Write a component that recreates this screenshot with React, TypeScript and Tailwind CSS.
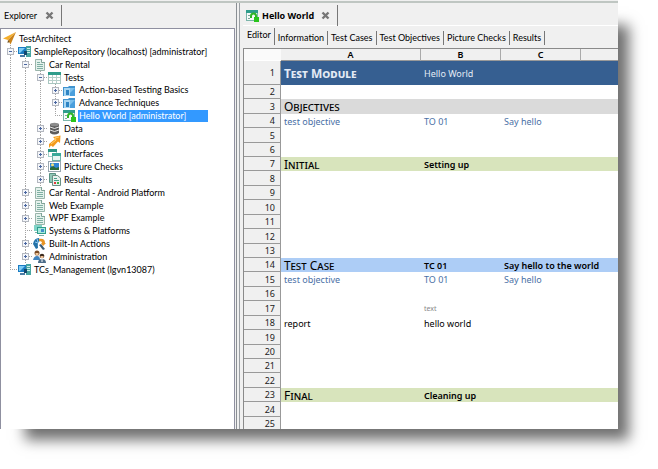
import { useState } from "react";
import type { ReactNode } from "react";

type IconName =
  | "logo" | "repo" | "project" | "tests" | "folder" | "module" | "data" | "actions"
  | "interfaces" | "picture" | "results" | "systems" | "builtin" | "admin";

function Glyph({ name }: { name: IconName }) {
  switch (name) {
    case "logo":
      return (
        <>
          <path d="M13 0L0 6.5L5 8Z" fill="#f5ae2b" />
          <path d="M13 0L5 8L7.5 12.5Z" fill="#c9821a" />
          <path d="M5 8L4.5 11L6.5 10Z" fill="#6b4a18" />
        </>
      );
    case "repo":
      return (
        <>
          <rect x="8" y="1" width="5" height="11" fill="#48a5a2" />
          <path d="M9 3.500H12M9 5.500H12M9 7.500H12" stroke="#c9efea" />
          <rect x="0" y="2" width="8" height="7" fill="#1b7cc2" />
          <path d="M1 3H7L2 8H1Z" fill="#7ccbf5" />
          <rect x="2" y="10" width="5" height="2" fill="#4a7ca6" />
          <rect x="6" y="6" width="3" height="4" fill="#14486e" />
        </>
      );
    case "project":
      return (
        <>
          <path d="M2.500 1.500H8.500L11.500 4.500V12.500H2.500Z" fill="#e4f1ec" stroke="#9ab5ab" />
          <path d="M8.500 1V4.500H12" fill="#fff" stroke="#7fa398" />
          <path d="M4 4.500H7M4 6.500H10M4 8.500H10M4 10.500H10" stroke="#7fb0a3" />
        </>
      );
    case "tests":
      return (
        <>
          <rect x="0.500" y="1.500" width="12" height="11" fill="#fff" stroke="#a9c6c0" />
          <rect x="0" y="1" width="13" height="3" fill="#2f9d8c" />
          <path d="M1 6.500H12M1 9.500H12M4.500 4V12M8.500 4V12" stroke="#b6cfca" />
        </>
      );
    case "folder":
      return (
        <>
          <path d="M0 3H5L6 2H12V12H0Z" fill="#3f93cf" />
          <path d="M7 4H12V12H7Z" fill="#4b9fdc" />
          <path d="M7 4H12L7 9Z" fill="#7cc0ec" />
          <rect x="1" y="4" width="6" height="8" fill="#a8d6f2" />
          <rect x="3" y="6" width="3" height="5" fill="#2d84c4" />
        </>
      );
    case "module":
      return (
        <>
          <rect x="0.500" y="1.500" width="11" height="10" fill="#f6faf9" stroke="#7bb5aa" />
          <rect x="0" y="1" width="12" height="3" fill="#2f9d8c" />
          <path d="M2 6.500H4M2 9.500H4" stroke="#7fa59d" />
          <path d="M5 9V7Q5 4.500 7.500 4.500Q10 4.500 10 7V9" fill="none" stroke="#2fb526" strokeWidth="2" />
          <rect x="8" y="8" width="5" height="5" fill="#29c41c" />
        </>
      );
    case "data":
      return (
        <>
          <path d="M2 2V11Q6.500 14 11 11V2Z" fill="#5c5c5c" />
          <ellipse cx="6.500" cy="2.500" rx="4.500" ry="1.800" fill="#8c8c8c" />
          <path d="M2 5Q6.500 8 11 5M2 8Q6.500 11 11 8" fill="none" stroke="#e6e6e6" />
        </>
      );
    case "actions":
      return (
        <>
          <path d="M12.500 0.500L5 2L7 4L1 9V13L3 10.500L5 12L10 6.500L12 8Z" fill="#f39a1d" />
          <path d="M11 2L7 3L8 5L3 9" fill="none" stroke="#ffd372" />
        </>
      );
    case "interfaces":
      return (
        <>
          <rect x="0.500" y="1.500" width="8" height="7" fill="#fff" stroke="#9fcfc6" />
          <rect x="0" y="1" width="9" height="3" fill="#2b9686" />
          <rect x="4.500" y="5.500" width="8" height="7" fill="#e8f6f3" stroke="#6fb3a7" />
          <rect x="4" y="5" width="9" height="3" fill="#3aa999" />
        </>
      );
    case "picture":
      return (
        <>
          <rect x="0.500" y="1.500" width="12" height="10" fill="#fff" stroke="#9aa7b0" />
          <rect x="2" y="3" width="9" height="7" fill="#2f86d6" />
          <path d="M2 10V8L5 6L8 8L11 7V10Z" fill="#2b6b3a" />
          <circle cx="4.500" cy="4.800" r="1.500" fill="#f3e27c" />
        </>
      );
    case "results":
      return (
        <>
          <path d="M1.500 0.500H7.500V9.500H1.500Z" fill="#8fc7b6" stroke="#5a9183" />
          <path d="M4.500 2.500H9.500L12.500 5V12.500H4.500Z" fill="#e8f1ee" stroke="#6a8f84" />
          <path d="M6 5.500H9M6 7.500H11" stroke="#48a08a" />
          <rect x="6" y="9" width="2" height="2" fill="#e23b3b" />
          <rect x="9" y="9" width="2" height="2" fill="#35b146" />
        </>
      );
    case "systems":
      return (
        <>
          <rect x="1" y="1" width="8" height="6" fill="#7fd3c6" />
          <rect x="4" y="3" width="9" height="7" fill="#2f9d8c" />
          <rect x="5" y="4" width="7" height="5" fill="#a9eadd" />
          <path d="M8 5H11V8H8Z" fill="#3f8fc9" />
          <path d="M6 11.500H11M2 8.500H4" stroke="#7fb0a8" />
        </>
      );
    case "builtin":
      return (
        <>
          <path d="M0 7Q1 1 6 1L7 4Q4 5 5 11L3 12Z" fill="#2472a8" />
          <path d="M2 5L5 6M4 2L5 5" stroke="#8fcaf0" />
          <path d="M6 2Q12 1 12 6H13L10 9L8 6H9Q9 4 6 4Z" fill="#e89422" />
          <path d="M6 8L8 7L12 12L10 13Z" fill="#3d5c74" />
        </>
      );
    case "admin":
      return (
        <>
          <circle cx="4" cy="3" r="2.500" fill="#7a4b24" />
          <path d="M2.500 3H5.500V5H2.500Z" fill="#f0c79b" />
          <path d="M0 10Q1 6 4 6Q7 6 7 10Z" fill="#3e82bd" />
          <circle cx="9" cy="6" r="2.300" fill="#3b2a1e" />
          <path d="M7.500 6H10.500V8H7.500Z" fill="#efc197" />
          <path d="M5 13Q5 9 9 9Q13 9 13 13Z" fill="#4d6d8a" />
          <path d="M9 9V12" stroke="#fff" />
        </>
      );
  }
}

function Icon({ name }: { name: IconName }) {
  return (
    <svg className="size-[13px] shrink-0" viewBox="0 0 13 13" aria-hidden="true">
      <Glyph name={name} />
    </svg>
  );
}

/* One guide cell per level: "|" passes through, "t" is a tee,
   "l" is the last corner, "+" and "-" are tees with an expander box. */
function Guide({ kind }: { kind: string }) {
  const line = { stroke: "#a4a4a4", strokeDasharray: "1 1" };
  const box = kind === "+" || kind === "-";
  const drawing = (
    <svg className="block h-full w-[15px]" viewBox="0 0 15 13" preserveAspectRatio="xMinYMin slice" aria-hidden="true">
      <path d={kind === "l" ? "M7.500 0V7" : "M7.500 0V13"} {...line} />
      {kind !== "|" && <path d="M7 6.500H15" {...line} />}
      {box && <rect x="4.500" y="3.500" width="6" height="6" fill="#f4f6fa" stroke="#b4b8c0" />}
      {box && <path d="M6 6.500H9" stroke="#4a66a0" />}
      {kind === "+" && <path d="M7.500 5V8" stroke="#4a66a0" />}
    </svg>
  );
  return box ? (
    <button type="button" aria-label={kind === "+" ? "Expand" : "Collapse"} className="h-full w-[15px] shrink-0 overflow-hidden">
      {drawing}
    </button>
  ) : (
    <span className="h-full w-[15px] shrink-0 overflow-hidden">{drawing}</span>
  );
}

const nodes: { guides: string; icon: IconName; label: string; selected?: boolean }[] = [
  { guides: "", icon: "logo", label: "TestArchitect" },
  { guides: "-", icon: "repo", label: "SampleRepository (localhost) [administrator]" },
  { guides: "|-", icon: "project", label: "Car Rental" },
  { guides: "||-", icon: "tests", label: "Tests" },
  { guides: "|||+", icon: "folder", label: "Action-based Testing Basics" },
  { guides: "|||+", icon: "folder", label: "Advance Techniques" },
  { guides: "|||l", icon: "module", label: "Hello World [administrator]", selected: true },
  { guides: "||+", icon: "data", label: "Data" },
  { guides: "||+", icon: "actions", label: "Actions" },
  { guides: "||+", icon: "interfaces", label: "Interfaces" },
  { guides: "||+", icon: "picture", label: "Picture Checks" },
  { guides: "||+", icon: "results", label: "Results" },
  { guides: "|+", icon: "project", label: "Car Rental - Android Platform" },
  { guides: "|+", icon: "project", label: "Web Example" },
  { guides: "|+", icon: "project", label: "WPF Example" },
  { guides: "|t", icon: "systems", label: "Systems & Platforms" },
  { guides: "|+", icon: "builtin", label: "Built-In Actions" },
  { guides: "|+", icon: "admin", label: "Administration" },
  { guides: "l", icon: "repo", label: "TCs_Management (lgvn13087)" },
];

function CloseButton({ label }: { label: string }) {
  return (
    <button type="button" aria-label={label} className="size-[9px]">
      <svg viewBox="0 0 9 9" className="block size-full">
        <path d="M1.500 1.500L7.500 7.500M7.500 1.500L1.500 7.500" stroke="#777" strokeWidth="2.400" />
      </svg>
    </button>
  );
}

function PaneTab({ children }: { children: ReactNode }) {
  return <div className="flex h-[21px] items-center border-r border-[#777] leading-[13px]">{children}</div>;
}

type Row = { a?: string; b?: string; c?: string; look?: string; head?: boolean };

const rows: Record<number, Row> = {
  1: { a: "Test Module", b: "Hello World", look: "bg-[#365f91] text-[#e4ebf5]", head: true },
  3: { a: "Objectives", look: "bg-[#dadada]", head: true },
  4: { a: "test objective", b: "TO 01", c: "Say hello", look: "text-[#4a70a6]" },
  7: { a: "Initial", b: "Setting up", look: "bg-[#d8e4bc]", head: true },
  14: { a: "Test Case", b: "TC 01", c: "Say hello to the world", look: "bg-[#adcdf6]", head: true },
  15: { a: "test objective", b: "TO 01", c: "Say hello", look: "text-[#4a70a6]" },
  17: { b: "text" },
  18: { a: "report", b: "hello world" },
  23: { a: "Final", b: "Cleaning up", look: "bg-[#d8e4bc]", head: true },
};

function rowHeight(n: number) {
  if (n === 1) return "h-[24px]";
  return (n % 7) % 2 ? "h-[15px]" : "h-[14px]";
}

function Sheet() {
  return (
    <table className="w-full table-fixed border-separate border-spacing-0 border-l border-t border-[#8a8a8a] text-left font-['Noto_Sans',sans-serif] text-[9px] leading-[13px] text-black">
      <colgroup>
        <col className="w-[37px]" />
        <col className="w-[140px]" />
        <col className="w-[80px]" />
        <col className="w-[80px]" />
        <col />
      </colgroup>
      <thead>
        <tr className="h-[12px] bg-[#f0f0f0] text-center leading-[11px]">
          <td className="border-b border-white bg-[#fafafa] p-0" />
          {["A", "B", "C", ""].map((c) => (
            <th key={c} scope="col" className="border-r border-b border-r-[#aaa] border-b-[#999] p-0 font-semibold last:border-r-0">
              {c}
            </th>
          ))}
        </tr>
      </thead>
      <tbody>
        {Array.from({ length: 25 }, (_, i) => i + 1).map((n) => {
          const row = rows[n] ?? {};
          const strong = row.head && n !== 1 ? "font-semibold" : "";
          return (
            <tr key={n} className={`${rowHeight(n)} ${row.look ?? ""}`}>
              <th scope="row" className="border-r border-b border-[#999] bg-[#f0f0f0] py-0 pr-[5px] pl-0 text-right font-normal text-[#222]">
                {n}
              </th>
              <td className="p-0 pl-[3px] whitespace-nowrap">
                <span
                  className={
                    row.head
                      ? `block text-[12px] [font-variant:small-caps] ${n === 1 ? "font-bold" : ""}`
                      : ""
                  }
                >
                  {row.a}
                </span>
              </td>
              <td className={`p-0 pl-[3px] whitespace-nowrap ${strong} ${n === 17 ? "text-[7px] text-[#888]" : ""}`}>{row.b}</td>
              <td className={`p-0 pl-[3px] whitespace-nowrap ${strong}`}>{row.c}</td>
              <td className="p-0" />
            </tr>
          );
        })}
      </tbody>
    </table>
  );
}

const views = ["Editor", "Information", "Test Cases", "Test Objectives", "Picture Checks", "Results"];

export default function App() {
  const [view, setView] = useState("Editor");
  return (
    <div className="h-screen overflow-hidden bg-white pr-10 pb-10 font-[Lato,sans-serif] text-[9px] text-black">
      <div className="flex h-full flex-col bg-[#f0f0f0] shadow-[18px_18px_13px_-7px_#707070]">
        <div className="h-[3px] shrink-0 border-b-2 border-[#bfc6c2]" />
        <div className="flex min-h-0 flex-1">
          <aside className="flex w-[237px] shrink-0 flex-col border-r border-[#8a8f94]">
            <div className="flex h-[25px] shrink-0 items-start pt-[2px] pl-1">
              <PaneTab>
                <span>Explorer</span>
                <span className="flex pr-[7px] pl-2">
                  <CloseButton label="Close Explorer" />
                </span>
              </PaneTab>
            </div>
            <ul className="mr-px min-h-0 flex-1 overflow-hidden border border-b-0 border-[#8f90a0] bg-white pt-[3px] pl-[2px]">
              {nodes.map((node, i) => (
                <li key={i} className={`flex items-center ${i % 5 === 4 ? "h-[12px]" : "h-[13px]"}`}>
                  {node.guides.split("").map((kind, k) => (
                    <Guide key={k} kind={kind} />
                  ))}
                  <Icon name={node.icon} />
                  <span
                    className={`ml-[2px] pl-px leading-[12px] whitespace-nowrap ${node.selected ? "w-[130px] bg-[#3399ff] text-white" : ""}`}
                  >
                    {node.label}
                  </span>
                </li>
              ))}
            </ul>
          </aside>
          <main className="ml-[2px] flex min-w-0 flex-1 flex-col border-l border-[#9a9fa4] pl-[3px]">
            <div className="flex h-[23px] shrink-0 items-start border-b border-white pt-[2px] pl-[3px]">
              <PaneTab>
                <Icon name="module" />
                <span className="pl-[3px] font-['Noto_Sans',sans-serif] font-bold">Hello World</span>
                <span className="flex px-[7px]">
                  <CloseButton label="Close Hello World" />
                </span>
              </PaneTab>
            </div>
            <nav className="flex h-[22px] shrink-0 items-end pb-[3px]">
              {views.map((v) => (
                <button
                  key={v}
                  type="button"
                  onClick={() => setView(v)}
                  className={`border-r border-[#777] px-[3px] whitespace-nowrap first:pl-1 ${v === view ? "h-[17px] pb-[3px]" : "h-[14px]"}`}
                >
                  {v}
                </button>
              ))}
            </nav>
            <div className="min-h-0 flex-1 overflow-hidden bg-white">
              <Sheet />
            </div>
          </main>
        </div>
      </div>
    </div>
  );
}
